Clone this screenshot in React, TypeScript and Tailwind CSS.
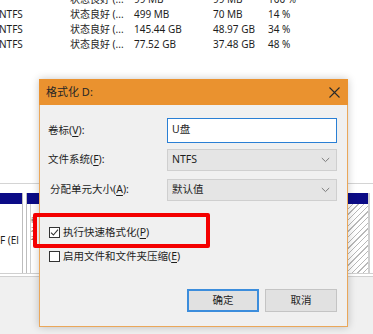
import { useState } from "react";

const rows = [
  { fs: "", status: "状态良好 (...", size: "99 MB", free: "99 MB", pct: "100 %" },
  { fs: "NTFS", status: "状态良好 (...", size: "499 MB", free: "70 MB", pct: "14 %" },
  { fs: "NTFS", status: "状态良好 (...", size: "145.44 GB", free: "48.97 GB", pct: "34 %" },
  { fs: "NTFS", status: "状态良好 (...", size: "77.52 GB", free: "37.48 GB", pct: "48 %" },
];

// label with the underlined access key, e.g. 卷标(V):
const Label = ({ text, hotkey, colon = true }: { text: string; hotkey: string; colon?: boolean }) => (
  <span>
    {text}(<span className="underline underline-offset-2">{hotkey}</span>){colon ? ":" : ""}
  </span>
);

const Chevron = () => (
  <svg width="9" height="6" viewBox="0 0 9 6" className="text-[#7a7a7a]">
    <path d="M0.8 1 L4.5 4.6 L8.2 1" fill="none" stroke="currentColor" strokeWidth="1" />
  </svg>
);

const Checkbox = ({ checked }: { checked: boolean }) => (
  <span className="w-[11px] h-[11px] border border-[#333] bg-white flex items-center justify-center shrink-0">
    {checked && (
      <svg width="9" height="9" viewBox="0 0 9 9">
        <path d="M1 4.6 L3.4 7 L8 1.6" fill="none" stroke="#333" strokeWidth="1.1" />
      </svg>
    )}
  </span>
);

export default function App() {
  const [label, setLabel] = useState("U盘");
  const [quick, setQuick] = useState(true);
  const [compress, setCompress] = useState(false);

  return (
    <div className="relative w-[373px] h-[334px] overflow-hidden bg-white text-[#1e1e1e] font-['Noto_Sans','Noto_Sans_CJK_SC',sans-serif]">
      {/* volume list behind the dialog, first row scrolled half out of view */}
      <div className="-mt-[8px] text-[10px] leading-[15px]">
        {rows.map((r, i) => (
          <div key={i} className="grid grid-cols-[70px_64px_79px_55px_1fr] whitespace-nowrap">
            <span className="-ml-[1px]">{r.fs}</span>
            <span>{r.status}</span>
            <span>{r.size}</span>
            <span>{r.free}</span>
            <span>{r.pct}</span>
          </div>
        ))}
      </div>

      {/* disk graph pane */}
      <div className="mt-[131px] border-t border-[#d4d4d4] pt-[9px]">
        <div className="flex h-[80px]">
          <div className="w-[23px] flex flex-col border-r border-[#bdbdbd]">
            <div className="h-[11px] bg-[#0b0b86]" />
            <div className="flex-1 flex items-center text-[10px] whitespace-nowrap overflow-hidden pt-[4px]">F (El</div>
          </div>
          <div className="flex-1 ml-[3px] flex flex-col border-l border-[#bdbdbd]">
            <div className="h-[11px] bg-[#0b0b86]" />
            <div className="flex-1 ml-[3px] border-l border-[#cfcfcf] text-[6px] leading-[9px] pt-[12px] text-[#555]">
              新<br />之<br />2
            </div>
          </div>
          <div className="w-[22px] ml-[1px] flex flex-col border-r-2 border-[#cfcfcf]">
            <div className="h-[11px] bg-[#0b0b86]" />
            <div className="flex-1 bg-[repeating-linear-gradient(135deg,#ffffff_0px,#ffffff_3px,#b9b9b9_3px,#b9b9b9_4px)]" />
          </div>
          <div className="w-[3px]" />
        </div>
        <div className="h-[4px] border-t border-b border-[#d0d0d0]" />
        <div className="h-[60px] bg-[#f0f0f0]" />
      </div>

      {/* format dialog */}
      <div className="absolute left-[39px] top-[79px] w-[309px] h-[248px] flex flex-col shadow-[0_0_8px_rgba(0,0,0,0.22)] text-[10.5px]">
        <div className="h-[26px] bg-[#ea922f] flex items-center justify-between pl-[7px] pr-[8px] text-[11px] text-[#262626]">
          <span>格式化 D:</span>
          <svg width="11" height="11" viewBox="0 0 11 11">
            <path d="M0.5 0.5 L10.5 10.5 M10.5 0.5 L0.5 10.5" stroke="#2a2a2a" strokeWidth="1.1" />
          </svg>
        </div>
        <div className="flex-1 bg-[#f0f0f0] border border-t-0 border-[#eaa75a] flex flex-col">
          <div className="grid grid-cols-[119px_1fr] items-center pl-[8px] pr-[10px] mt-[13px]">
            <Label text="卷标" hotkey="V" />
            <input
              value={label}
              onChange={(e) => setLabel(e.target.value)}
              className="h-[25px] border border-[#2a7fd4] bg-white px-[4px] pb-[4px] text-[10.5px] outline-none"
            />
          </div>
          <div className="grid grid-cols-[119px_1fr] items-center pl-[8px] pr-[10px] mt-[6px]">
            <Label text="文件系统" hotkey="F" />
            <div className="h-[22px] border border-[#cfcfcf] bg-[#e5e5e5] flex items-center justify-between pl-[4px] pr-[6px]">
              <span>NTFS</span>
              <Chevron />
            </div>
          </div>
          <div className="grid grid-cols-[119px_1fr] items-center pl-[10px] pr-[10px] mt-[8px]">
            <Label text="分配单元大小" hotkey="A" />
            <div className="-ml-[2px] h-[22px] border border-[#cfcfcf] bg-[#e5e5e5] flex items-center justify-between pl-[4px] pr-[6px]">
              <span>默认值</span>
              <Chevron />
            </div>
          </div>

          <label className="flex items-center gap-[3px] pl-[9px] mt-[24px] h-[15px]" onClick={() => setQuick(!quick)}>
            <Checkbox checked={quick} />
            <Label text="执行快速格式化" hotkey="P" colon={false} />
          </label>
          <label className="flex items-center gap-[3px] pl-[9px] mt-[9px] h-[15px]" onClick={() => setCompress(!compress)}>
            <Checkbox checked={compress} />
            <Label text="启用文件和文件夹压缩" hotkey="E" colon={false} />
          </label>

          <div className="flex justify-end gap-[6px] pr-[10px] mt-[25px]">
            <button className="w-[72px] h-[23px] bg-[#e1e1e1] border-2 border-[#3c8ddc]">确定</button>
            <button className="w-[72px] h-[23px] bg-[#e1e1e1] border border-[#c4c4c4]">取消</button>
          </div>
        </div>
      </div>

      {/* red highlight around quick format */}
      <div className="absolute left-[33px] top-[213px] w-[177px] h-[35px] border-4 border-[#f40000] rounded-[2px]" />
    </div>
  );
}
